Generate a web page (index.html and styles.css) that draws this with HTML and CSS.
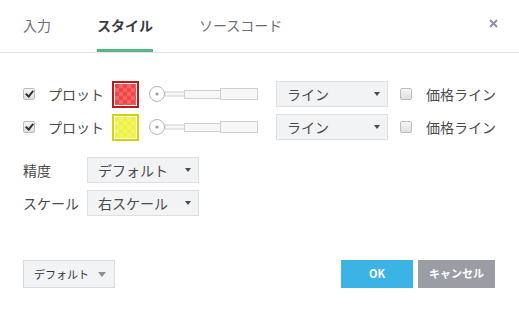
FILE: index.html
```html
<!DOCTYPE html>
<html lang="ja">
<head>
    <meta charset="UTF-8">
    <title>スタイル</title>
    <link rel="stylesheet" href="styles.css">
</head>
<body>
    <div class="dialog">
        <div class="header">
            <div class="tabs">
                <div class="tab">入力</div>
                <div class="tab active">スタイル</div>
                <div class="tab">ソースコード</div>
            </div>
            <svg class="close" width="9" height="9" viewBox="0 0 9 9">
                <path d="M1 1L8 8M8 1L1 8" stroke="#8e929b" stroke-width="2"/>
            </svg>
        </div>

        <div class="content">
            <div class="plot-row">
                <span class="check checked"></span>
                <span class="plot-label">プロット</span>
                <span class="swatch red"><span class="swatch-fill"></span></span>
                <svg class="width-slider" width="110" height="26" viewBox="0 0 110 26">
                    <rect x="17" y="11" width="20" height="4" fill="#f7f7f7" stroke="#cdd0d5"/>
                    <rect x="36.5" y="9.5" width="36" height="8" fill="#f7f7f7" stroke="#cdd0d5"/>
                    <rect x="72.5" y="7.5" width="37" height="11" fill="#f7f7f7" stroke="#cdd0d5"/>
                    <circle cx="9" cy="13" r="7.5" fill="#fff" stroke="#b4b7c0"/>
                    <circle cx="9" cy="13" r="1.6" fill="#9a9ea8"/>
                </svg>
                <div class="select line-select">ライン<span class="caret"></span></div>
                <span class="check"></span>
                <span class="price-label">価格ライン</span>
            </div>
            <div class="plot-row">
                <span class="check checked"></span>
                <span class="plot-label">プロット</span>
                <span class="swatch yellow"><span class="swatch-fill"></span></span>
                <svg class="width-slider" width="110" height="26" viewBox="0 0 110 26">
                    <rect x="17" y="11" width="20" height="4" fill="#f7f7f7" stroke="#cdd0d5"/>
                    <rect x="36.5" y="9.5" width="36" height="8" fill="#f7f7f7" stroke="#cdd0d5"/>
                    <rect x="72.5" y="7.5" width="37" height="11" fill="#f7f7f7" stroke="#cdd0d5"/>
                    <circle cx="9" cy="13" r="7.5" fill="#fff" stroke="#b4b7c0"/>
                    <circle cx="9" cy="13" r="1.6" fill="#9a9ea8"/>
                </svg>
                <div class="select line-select">ライン<span class="caret"></span></div>
                <span class="check"></span>
                <span class="price-label">価格ライン</span>
            </div>

            <div class="option-row first">
                <span class="option-label">精度</span>
                <div class="select option-select">デフォルト<span class="caret"></span></div>
            </div>
            <div class="option-row">
                <span class="option-label">スケール</span>
                <div class="select option-select">右スケール<span class="caret"></span></div>
            </div>
        </div>

        <div class="footer">
            <div class="defaults-btn">デフォルト<span class="caret big"></span></div>
            <div class="actions">
                <div class="btn ok">OK</div>
                <div class="btn cancel">キャンセル</div>
            </div>
        </div>
    </div>
</body>
</html>
```

FILE: styles.css
```css
* {
    margin: 0;
    padding: 0;
    box-sizing: border-box;
    font-family: "Noto Sans CJK JP", "Noto Sans", sans-serif;
}

body {
    background-color: #fff;
    color: #4a4a4a;
    font-size: 14px;
}

.dialog {
    width: 519px;
    height: 312px;
    background-color: #fff;
}

.header {
    height: 53px;
    border-bottom: 1px solid #e0e3eb;
    display: flex;
    justify-content: space-between;
    padding: 0 21px 0 23px;
}

.tabs {
    display: flex;
    gap: 46px;
}

.tab {
    height: 52px;
    line-height: 50px;
    font-size: 14px;
    color: #6b6e78;
    border-bottom: 3px solid transparent;
}

.tab.active {
    color: #3a3d45;
    font-weight: bold;
    border-bottom-color: #52b986;
}

.close {
    margin-top: 19px;
}

.content {
    padding: 28px 23px 0;
}

.plot-row {
    display: flex;
    align-items: center;
    height: 26px;
    margin-bottom: 7px;
}

.check {
    width: 12px;
    height: 12px;
    border: 1px solid #b9bcc2;
    border-radius: 2px;
    background: linear-gradient(#f6f6f6, #dedfe2);
    position: relative;
}

.check.checked::after {
    content: "";
    position: absolute;
    left: 3px;
    top: 0px;
    width: 3px;
    height: 6px;
    border: solid #333;
    border-width: 0 2px 2px 0;
    transform: rotate(40deg);
}

.plot-label {
    margin-left: 13px;
    width: 64px;
    color: #4a4a4a;
}

.swatch {
    width: 27px;
    height: 27px;
    padding: 1px;
    background: #fff;
    border: 2px solid;
}

.swatch-fill {
    display: block;
    width: 100%;
    height: 100%;
    background-size: 8px 8px;
}

.swatch.red {
    border-color: #c3161b;
}

.swatch.red .swatch-fill {
    background-color: #f04848;
    background-image: conic-gradient(#f36363 25%, transparent 0 50%, #f36363 0 75%, transparent 0);
}

.swatch.yellow {
    border-color: #d3d30a;
}

.swatch.yellow .swatch-fill {
    background-color: #efef44;
    background-image: conic-gradient(#f3f366 25%, transparent 0 50%, #f3f366 0 75%, transparent 0);
}

.width-slider {
    margin-left: 9px;
}

.select {
    height: 26px;
    background-color: #f2f3f5;
    border: 1px solid #dcdfe3;
    padding: 0 7px 0 10px;
    display: flex;
    align-items: center;
    justify-content: space-between;
    color: #4a4a4a;
}

.caret {
    width: 0;
    height: 0;
    border-left: 3.5px solid transparent;
    border-right: 3.5px solid transparent;
    border-top: 4px solid #4a4a4a;
}

.caret.big {
    border-left-width: 4px;
    border-right-width: 4px;
    border-top: 5px solid #8d9097;
    margin-left: 9px;
}

.line-select {
    width: 112px;
    margin-left: 18px;
    margin-right: 12px;
}

.price-label {
    margin-left: 14px;
}

.option-row {
    display: flex;
    align-items: center;
    height: 26px;
    margin-bottom: 7px;
}

.option-row.first {
    margin-top: 17px;
}

.option-label {
    width: 64px;
}

.option-select {
    width: 112px;
}

.footer {
    display: flex;
    justify-content: space-between;
    align-items: center;
    padding: 0 24px 0 23px;
    margin-top: 44px;
}

.defaults-btn {
    height: 28px;
    padding: 0 8px 0 10px;
    background-color: #f2f3f5;
    border: 1px solid #d6d9dd;
    font-size: 11px;
    color: #333;
    display: flex;
    align-items: center;
}

.actions {
    display: flex;
    gap: 5px;
}

.btn {
    height: 28px;
    line-height: 27px;
    text-align: center;
    color: #fff;
    font-weight: bold;
    font-size: 11px;
}

.btn.ok {
    width: 72px;
    background-color: #3bb3e4;
}

.btn.cancel {
    width: 77px;
    background-color: #9a9da4;
}
```
